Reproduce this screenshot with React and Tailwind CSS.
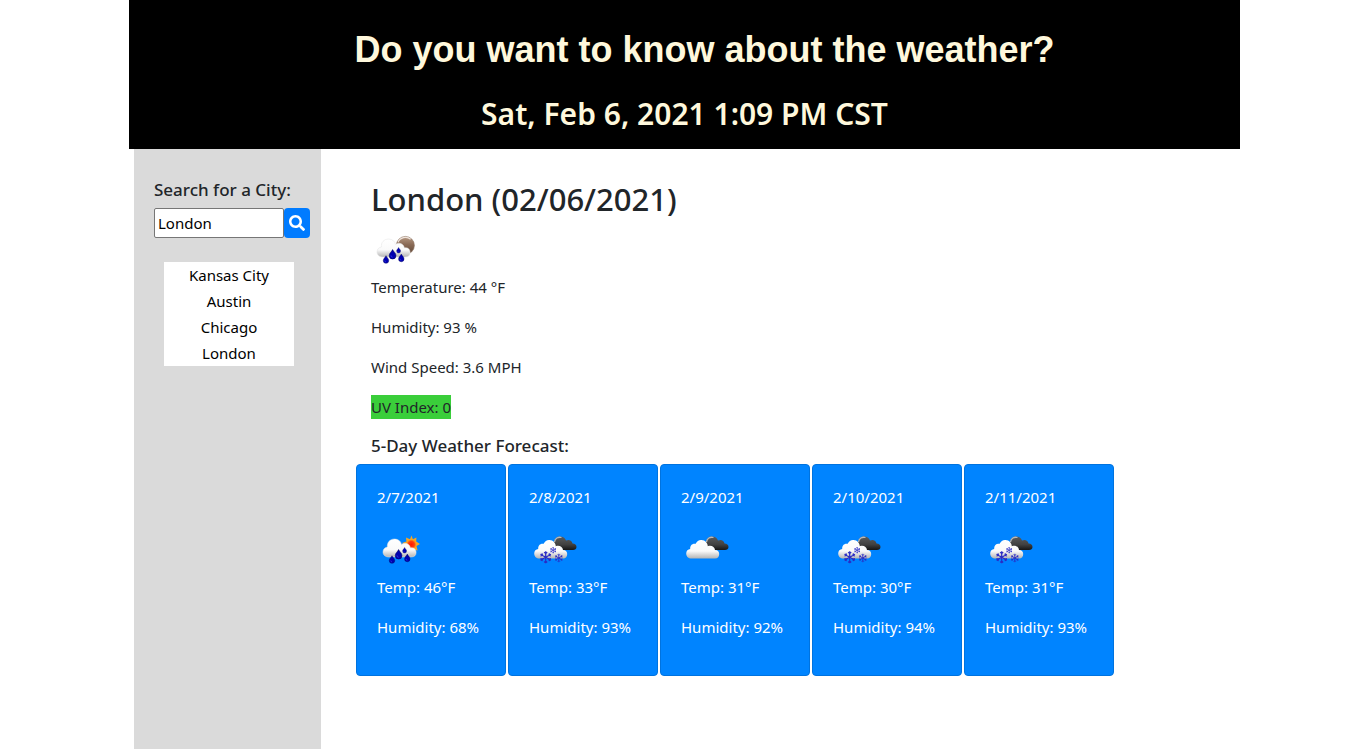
import { useId, useState } from 'react';

const cities = ['Kansas City', 'Austin', 'Chicago', 'London'];

const forecast = [
  { date: '2/7/2021', icon: 'rain-day', label: 'Rain', temp: 46, humidity: 68 },
  { date: '2/8/2021', icon: 'snow', label: 'Snow', temp: 33, humidity: 93 },
  { date: '2/9/2021', icon: 'clouds', label: 'Clouds', temp: 31, humidity: 92 },
  { date: '2/10/2021', icon: 'snow', label: 'Snow', temp: 30, humidity: 94 },
  { date: '2/11/2021', icon: 'snow', label: 'Snow', temp: 31, humidity: 93 },
];

function Drop({ x, y, s }) {
  return (
    <g transform={`translate(${x} ${y}) scale(${s})`}>
      <path d="M0 -4.600C.8 -2.600 3.200 -1.200 3.200 1.200A3.200 3.200 0 0 1 -3.200 1.200C-3.200 -1.200 -.8 -2.600 0 -4.600Z" fill="#0000b0" stroke="#000060" strokeWidth=".5" />
      <path d="M-1.500 1A1.600 1.600 0 0 0 0 2.700" fill="none" stroke="#3c3cf0" strokeWidth=".7" />
    </g>
  );
}

function Flake({ x, y, r }) {
  return (
    <g transform={`translate(${x} ${y}) scale(${r / 6})`} stroke="#2a2ac4" strokeWidth="1.2" fill="none">
      {[0, 60, 120, 180, 240, 300].map((a) => (
        <path key={a} transform={`rotate(${a})`} d="M0 0V-6M-1.500 -5.200L0 -3.700L1.500 -5.200" />
      ))}
    </g>
  );
}

function WeatherIcon({ kind, label }) {
  const id = useId();
  const cloud = `${id}c`;
  const dark = `${id}d`;
  const moon = `${id}m`;
  const sun = `${id}s`;
  const rain = kind === 'rain-day' || kind === 'rain-night';
  return (
    <svg role="img" aria-label={label} viewBox="0 0 50 50" className="block size-[50px]">
      <defs>
        <linearGradient id={cloud} x1="0" y1="0" x2="0" y2="1">
          <stop offset="0" stopColor="#fff" />
          <stop offset=".6" stopColor="#fafafa" />
          <stop offset="1" stopColor="#b4b4b4" />
        </linearGradient>
        <linearGradient id={dark} x1="0" y1="0" x2="0" y2="1">
          <stop offset="0" stopColor="#5c5c5c" />
          <stop offset=".6" stopColor="#404040" />
          <stop offset="1" stopColor="#161616" />
        </linearGradient>
        <linearGradient id={moon} x1="0" y1="0" x2="0" y2="1">
          <stop offset="0" stopColor="#b79a84" />
          <stop offset=".45" stopColor="#8a6b56" />
          <stop offset="1" stopColor="#5f4636" />
        </linearGradient>
        <radialGradient id={sun}>
          <stop offset="0" stopColor="#ff1800" />
          <stop offset=".65" stopColor="#ff3c10" />
          <stop offset="1" stopColor="#ff9a20" />
        </radialGradient>
      </defs>
      {kind === 'rain-night' && (
        <>
          <circle cx="34.4" cy="20.4" r="9" fill={`url(#${moon})`} stroke="#8f7766" strokeWidth=".6" />
          <path d="M27 17.400A8 8 0 0 1 39.600 14.200" fill="none" stroke="#efe4dc" strokeWidth="1.2" />
        </>
      )}
      {kind === 'rain-day' && (
        <>
          <path d="M34.500 10.500L35.900 14.300L39.400 12.600L39.200 16.600L43 19L39.500 21L40.600 25.600L37 24.600L34.500 28L32 24.600L27 26L29 21L25 18L29.400 16.600L29 12.600L33 14.300Z" fill="#f6a524" />
          <circle cx="34.3" cy="19.5" r="4.8" fill={`url(#${sun})`} />
        </>
      )}
      {!rain && (
        <>
          <path d="M28 25C25 24 24 20 25 17C26 13 28 11.5 31 11.5C34 11.5 36 13 37 15.5C40 14 43 15.5 43.5 18.5C46 18.5 47.500 20 47.500 22C47.500 24 46 25 44 25Z" fill={`url(#${dark})`} />
          <path d="M25.500 17C26 13.500 29 11.500 32.500 12.500" fill="none" stroke="#b8b8b8" strokeWidth="1.3" />
        </>
      )}
      {rain ? (
        <path d="M12 32C8.5 32 6 30 6 27C6 24 8 22.5 10.4 22C9.8 17.6 13 14 17.5 14C21.5 14 24 16.5 24.5 19.5C28 17 32.5 18.5 33.4 22.8C37 22.2 39.1 24.4 39.1 27.4C39.1 30.4 37.4 32 34 32Z" fill={`url(#${cloud})`} stroke="#e2e2e2" strokeWidth=".5" />
      ) : (
        <path d="M10.5 33.5C7.5 33.5 5.2 31.3 5.2 28.4C5.2 25.8 7 24.3 9.2 24C8.8 20.4 11.5 18 14.7 18.8C15.8 16 18 14.8 20.5 15C24.3 15.2 26.7 18 26.8 21.2C30.3 19.8 33.7 21.8 34 25C37 25 38.2 26.8 38.2 29C38.2 31.4 36.9 33.5 34 33.5Z" fill={`url(#${cloud})`} />
      )}
      {rain && (
        <>
          <Drop x={21.6} y={29.4} s={1.05} />
          <Drop x={15} y={34.6} s={0.85} />
          <Drop x={27.6} y={25.3} s={0.62} />
          <Drop x={30.3} y={33} s={0.85} />
        </>
      )}
      {kind === 'snow' && (
        <>
          <Flake x={16.7} y={32.3} r={6} />
          <Flake x={24.2} y={25.2} r={3.2} />
          <Flake x={29.8} y={33} r={4.2} />
        </>
      )}
    </svg>
  );
}

export default function App() {
  const [query, setQuery] = useState('London');
  return (
    <div className="mx-auto flex min-h-screen max-w-[1111px] flex-col bg-white font-['Noto_Sans',sans-serif] text-[15px] leading-6 text-[#212529]">
      <header className="bg-black pt-[26px] pb-4 text-center text-[#fff8dc]">
        <h1 className="pl-10 font-['Liberation_Sans',sans-serif] text-[36px] leading-[48px] font-bold">Do you want to know about the weather?</h1>
        <p className="mt-5 text-[30px] leading-[39px] font-semibold">Sat, Feb 6, 2021 1:09 PM CST</p>
      </header>

      <div className="flex grow gap-[35px] pl-[5px]">
        <aside className="w-[187px] shrink-0 bg-[#dadada] pt-[30px] pl-5">
          <form onSubmit={(e) => e.preventDefault()}>
            <label htmlFor="city" className="block text-[17px] leading-[21px] font-medium">Search for a City:</label>
            <div className="mt-2 flex">
              <input id="city" type="text" value={query} onChange={(e) => setQuery(e.target.value)} className="h-[30px] w-[130px] rounded-xs border border-[#767676] bg-white px-[3px] text-black" />
              <button type="submit" aria-label="Search" className="flex h-[30px] w-[26px] items-center justify-center rounded bg-[#007bff] text-white">
                <svg viewBox="0 0 512 512" className="size-4" fill="currentColor" aria-hidden="true">
                  <path d="M505 442.7L405.3 343c-4.5-4.5-10.6-7-17-7H372c27.600-35.300 44-79.700 44-128C416 93.100 322.900 0 208 0S0 93.100 0 208s93.100 208 208 208c48.300 0 92.700-16.400 128-44v16.300c0 6.400 2.500 12.500 7 17l99.700 99.700c9.400 9.400 24.600 9.400 33.900 0l28.300-28.300c9.400-9.400 9.400-24.600.1-34zM208 336c-70.700 0-128-57.200-128-128 0-70.700 57.200-128 128-128 70.700 0 128 57.200 128 128 0 70.700-57.200 128-128 128z" />
                </svg>
              </button>
            </div>
          </form>
          <ul className="mt-6 ml-2.5 w-[130px] bg-white text-center text-black">
            {cities.map((city) => (
              <li key={city}>
                <button type="button" onClick={() => setQuery(city)} className="block w-full leading-[26px]">{city}</button>
              </li>
            ))}
          </ul>
        </aside>

        <main className="min-w-0 grow pt-8">
          <section className="pl-[15px]">
            <h2 className="text-[31px] leading-9 font-medium">London (02/06/2021)</h2>
            <div className="mt-2">
              <WeatherIcon kind="rain-night" label="Rain" />
            </div>
            <div className="flex flex-col items-start gap-4">
              <p>Temperature: 44 °F</p>
              <p>Humidity: 93 %</p>
              <p>Wind Speed: 3.6 MPH</p>
              <p className="bg-[#3ace3a]">UV Index: 0</p>
            </div>
            <h3 className="mt-4 text-[17px] leading-[21px] font-medium">5-Day Weather Forecast:</h3>
          </section>
          <section aria-label="Forecast" className="mt-2 flex flex-wrap gap-0.5">
            {forecast.map((day) => (
              <article key={day.date} className="w-[150px] rounded border border-[#0073df] bg-[#0084ff] p-5 text-white">
                <p>{day.date}</p>
                <div className="mt-4">
                  <WeatherIcon kind={day.icon} label={day.label} />
                </div>
                <p>Temp: {day.temp}°F</p>
                <p className="my-4">Humidity: {day.humidity}%</p>
              </article>
            ))}
          </section>
        </main>
      </div>
    </div>
  );
}
